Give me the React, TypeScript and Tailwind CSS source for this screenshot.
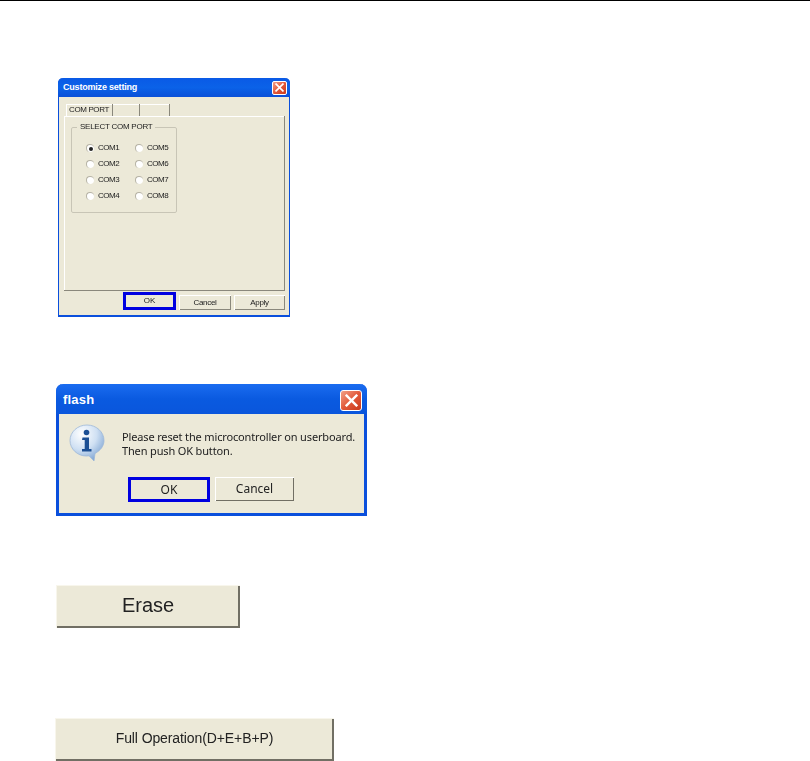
const font = { fontFamily: '"Liberation Sans", Arial, sans-serif' };

const CloseButton = ({ size }: { size: "sm" | "lg" }) => (
  <div
    className={`flex items-center justify-center border border-white bg-gradient-to-br from-[#f0a088] via-[#e2593a] to-[#c8391c] ${
      size === "lg" ? "h-[21px] w-[22px] rounded-[3px]" : "h-[14px] w-[15px] rounded-[2px]"
    }`}
  >
    <svg viewBox="0 0 12 12" className={size === "lg" ? "h-[13px] w-[13px]" : "h-[9px] w-[9px]"}>
      <path d="M1.5 1.5l9 9M10.5 1.5l-9 9" stroke="#fff" strokeWidth="2.2" strokeLinecap="square" fill="none" />
    </svg>
  </div>
);

const Radio = ({ label, checked }: { label: string; checked?: boolean }) => (
  <div className="flex h-4 items-center gap-[4px]">
    <div className="flex h-[8px] w-[8px] items-center justify-center rounded-full border-t border-l border-[#b5b2a4] bg-white">
      {checked && <div className="h-[4px] w-[4px] rounded-full bg-[#222]" />}
    </div>
    <span className="text-[8px] tracking-[-0.5px] text-[#222]">{label}</span>
  </div>
);

const SmallButton = ({ label, width }: { label: string; width: string }) => (
  <div
    className={`flex h-[15px] items-center justify-center bg-[#ece9d8] text-[8px] tracking-[-0.3px] text-[#222] shadow-[inset_1px_1px_0_#fff,inset_-1px_-1px_0_#8a887c] ${width}`}
  >
    {label}
  </div>
);

const WinButton = ({ label, width }: { label: string; width: string }) => (
  <div
    className={`flex h-[24px] items-center justify-center bg-[#ece9d8] text-[12px] text-[#222] shadow-[inset_1px_1px_0_#fff,inset_-1px_-1px_0_#716f64] ${width}`}
    style={{ fontFamily: '"Noto Sans", sans-serif' }}
  >
    {label}
  </div>
);

const InfoIcon = () => (
  <svg viewBox="0 0 36 38" className="h-[38px] w-[36px]">
    <defs>
      <radialGradient id="bubble" cx="35%" cy="25%" r="80%">
        <stop offset="0%" stopColor="#ffffff" />
        <stop offset="55%" stopColor="#cfe0f3" />
        <stop offset="100%" stopColor="#7fa5d3" />
      </radialGradient>
    </defs>
    <path
      d="M18 1C8.5 1 1 8 1 16.5S8.5 32 17 32c1 0 2 0 3-.2L25 37l1-7.5c5.5-3 9-7.5 9-13C35 8 27.5 1 18 1z"
      fill="url(#bubble)"
      stroke="#9db8d8"
      strokeWidth="0.8"
    />
    <circle cx="17.5" cy="8.5" r="2.8" fill="#1c4f94" />
    <path d="M13.5 13.5h6.5v11.5h2.5v2.5h-9.5V25h2.7v-9h-2.7z" fill="#1c4f94" />
  </svg>
);

const ports = ["COM1", "COM5", "COM2", "COM6", "COM3", "COM7", "COM4", "COM8"];

export default function App() {
  return (
    <div className="h-[761px] w-[810px] overflow-hidden border-t border-black bg-white" style={font}>
      {/* customize setting */}
      <div className="ml-[58px] mt-[77px] flex h-[239px] w-[232px] flex-col rounded-t-[5px] border-x border-b-2 border-[#0a4fdc] bg-[#ece9d8] blur-[0.3px]">
        <div className="-mx-px flex h-[19px] items-center justify-between rounded-t-[5px] bg-gradient-to-b from-[#0a5ae6] via-[#0b62e8] to-[#0a50d8] pl-[5px] pr-[3px]">
          <span className="whitespace-nowrap text-[9px] font-bold tracking-[-0.2px] text-white">Customize setting</span>
          <CloseButton size="sm" />
        </div>
        <div className="flex flex-1 flex-col pl-[5px] pr-[4px]">
          <div className="mt-[7px] flex h-[12px] pl-[2px]">
            <div className="flex w-[47px] items-center justify-center whitespace-nowrap border-r border-[#8a887c] text-[8px] tracking-[-0.4px] text-[#222] shadow-[inset_1px_1px_0_#fff]">
              COM PORT
            </div>
            <div className="w-[27px] border-r border-[#8a887c] shadow-[inset_0_1px_0_#fff]" />
            <div className="w-[30px] border-r border-[#8a887c] shadow-[inset_0_1px_0_#fff]" />
          </div>
          <div className="h-[175px] border-r border-b border-[#8a887c] pl-[7px] pt-[6px] shadow-[inset_1px_1px_0_#fff]">
            <fieldset className="h-[91px] w-[106px] rounded-[2px] border border-[#c8c5b6] pl-[14px] pt-[8px]">
              <legend className="-ml-[9px] whitespace-nowrap px-[3px] text-[8px] leading-[10px] tracking-[-0.25px] text-[#222]">
                SELECT COM PORT
              </legend>
              <div className="grid w-[90px] grid-cols-[49px_41px]">
                {ports.map((port) => (
                  <Radio key={port} label={port} checked={port === "COM1"} />
                ))}
              </div>
            </fieldset>
          </div>
          <div className="mt-[1px] flex justify-end gap-[3px]">
            <div className="border-[3px] border-[#0000e0] bg-[#ece9d8]">
              <div className="flex h-[12px] w-[47px] items-center justify-center text-[8px] text-[#222]">OK</div>
            </div>
            <div className="mt-[3px] flex gap-[3px]">
              <SmallButton label="Cancel" width="w-[52px]" />
              <SmallButton label="Apply" width="w-[51px]" />
            </div>
          </div>
        </div>
      </div>

      {/* flash */}
      <div className="ml-[56px] mt-[67px] flex h-[132px] w-[311px] flex-col rounded-t-[7px] border-x-[3px] border-b-[3px] border-[#0a4fdc] bg-[#ece9d8] blur-[0.3px]">
        <div className="-mx-[3px] flex h-[30px] items-center justify-between rounded-t-[7px] bg-gradient-to-b from-[#1a6cf0] via-[#0a5ae0] to-[#0a56dc] pl-[7px] pr-[5px] pt-[2px]">
          <span className="text-[13px] font-bold tracking-[0.2px] text-white">flash</span>
          <CloseButton size="lg" />
        </div>
        <div className="flex pl-[10px] pt-[10px]" style={{ fontFamily: '"Noto Sans", sans-serif' }}>
          <InfoIcon />
          <div className="ml-[17px] pt-[6px] text-[11px] leading-[14px] tracking-[-0.15px] text-[#222]">
            <div className="whitespace-nowrap">Please reset the microcontroller on userboard.</div>
            <div className="whitespace-nowrap">Then push OK button.</div>
          </div>
        </div>
        <div className="ml-[69px] mt-[15px] flex gap-[5px]">
          <div className="border-[3px] border-[#0000e0] bg-[#ece9d8]">
            <div
              className="flex h-[19px] w-[76px] items-center justify-center text-[12px] text-[#222]"
              style={{ fontFamily: '"Noto Sans", sans-serif' }}
            >
              OK
            </div>
          </div>
          <WinButton label="Cancel" width="w-[79px]" />
        </div>
      </div>

      {/* erase */}
      <div className="ml-[56px] mt-[69px] flex h-[43px] w-[184px] items-center justify-center bg-[#ece9d8] pb-[3px] text-[20px] text-[#222] shadow-[inset_1px_1px_0_#f8f6ec,inset_-2px_-2px_0_#716f64] blur-[0.3px]">
        Erase
      </div>

      {/* full operation */}
      <div className="ml-[55px] mt-[90px] flex h-[43px] w-[279px] items-center justify-center bg-[#ece9d8] pb-[2px] text-[14px] tracking-[-0.1px] text-[#222] shadow-[inset_1px_1px_0_#f8f6ec,inset_-2px_-2px_0_#716f64] blur-[0.3px]">
        Full Operation(D+E+B+P)
      </div>
    </div>
  );
}
